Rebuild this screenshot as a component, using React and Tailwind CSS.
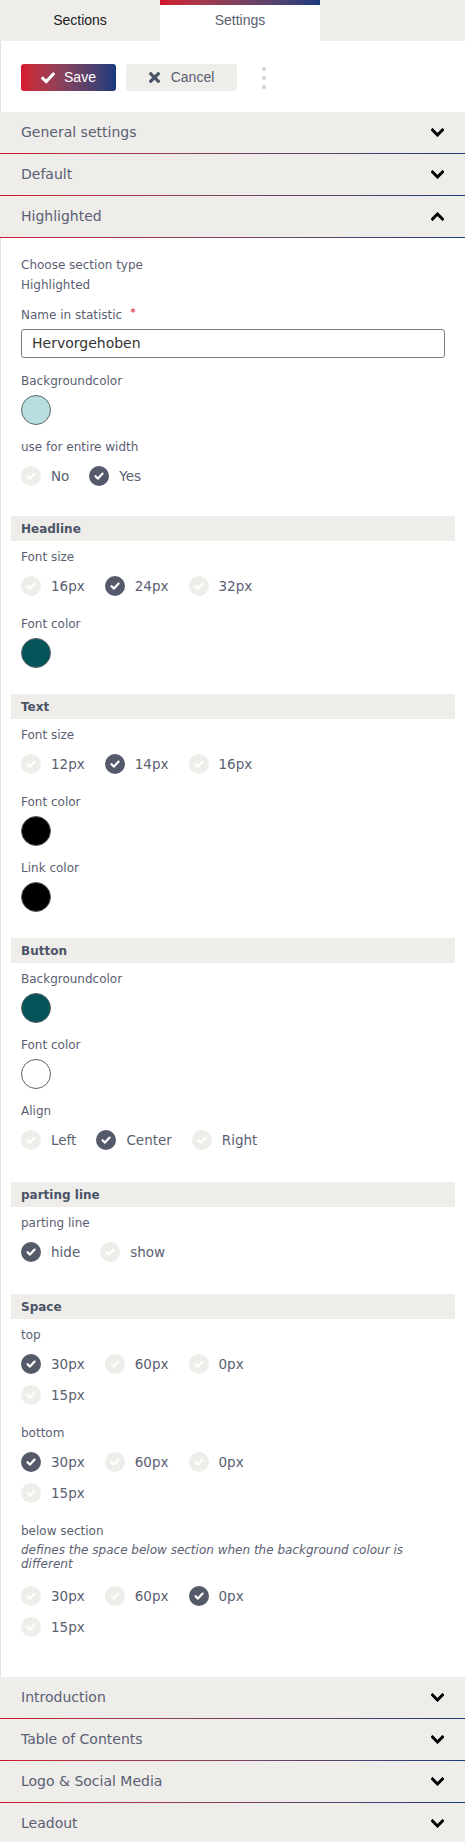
import React from 'react';

const sans = { fontFamily: '"DejaVu Sans", Verdana, sans-serif' };
const arial = { fontFamily: '"Liberation Sans", Arial, sans-serif' };

function Chevron({ up = false }) {
  return (
    <svg width="13" height="9" viewBox="0 0 13 9" className="shrink-0">
      <polyline
        points={up ? '1.5,7 6.5,2 11.5,7' : '1.5,2 6.5,7 11.5,2'}
        fill="none"
        stroke="#000"
        strokeWidth="3"
        strokeLinecap="square"
      />
    </svg>
  );
}

function GradientLine() {
  return <div className="h-px w-full bg-gradient-to-r from-[#d0142c] to-[#163c7e]" />;
}

function AccordionHeader({ title, open = false, line = true }) {
  return (
    <>
      <div className="flex h-[41px] items-center justify-between bg-[#eeedea] pl-[21px] pr-[21px]">
        <span className="text-[14px] text-[#5a6072]" style={sans}>{title}</span>
        <Chevron up={open} />
      </div>
      {line && <GradientLine />}
    </>
  );
}

function CheckMark({ color = '#fff', size = 12 }) {
  return (
    <svg width={size} height={size} viewBox="0 0 12 12">
      <polyline points="2.5,6.2 5,8.6 9.6,3.6" fill="none" stroke={color} strokeWidth="2.2" strokeLinecap="round" strokeLinejoin="round" />
    </svg>
  );
}

function Radio({ label, checked }) {
  return (
    <div className="mr-5 flex h-5 items-center">
      <span
        className={
          'flex h-5 w-5 items-center justify-center rounded-full ' +
          (checked ? 'bg-[#555a6b]' : 'bg-[#eeedea]')
        }
      >
        <CheckMark />
      </span>
      <span className="ml-[10px] text-[13.5px] text-[#5a6072]" style={sans}>{label}</span>
    </div>
  );
}

function RadioGroup({ options, value, spaced }) {
  return (
    <div className={(spaced ? 'mt-[15px] ' : 'mt-[9px] ') + 'flex w-[300px] flex-wrap gap-y-[11px] pb-[6px]'}>
      {options.map((o) => (
        <Radio key={o} label={o} checked={o === value} />
      ))}
    </div>
  );
}

function Label({ children }) {
  return (
    <div className="text-[12px] leading-5 text-[#5a6072]" style={sans}>
      {children}
    </div>
  );
}

function ColorField({ label, color }) {
  return (
    <div className="mb-3">
      <Label>{label}</Label>
      <div
        className="mt-1 h-[30px] w-[30px] rounded-full border border-[#5f6366]"
        style={{ backgroundColor: color }}
      />
    </div>
  );
}

function RadioField({ label, options, value, hint }) {
  return (
    <div className="mb-3">
      <Label>{label}</Label>
      {hint && (
        <div className="mt-[3px] text-[12px] italic leading-[13.5px] text-[#5a6072]" style={sans}>
          {hint}
        </div>
      )}
      <RadioGroup options={options} value={value} spaced={!!hint} />
    </div>
  );
}

function SubSection({ title, children }) {
  return (
    <div className="mb-[14px] flex flex-col">
      <div className="flex h-[25px] items-center bg-[#eeedea] pl-[10px]">
        <span className="text-[12px] font-bold text-[#4b5366]" style={sans}>{title}</span>
      </div>
      <div className="flex flex-col px-[10px] pt-[6px]">{children}</div>
    </div>
  );
}

export default function App() {
  return (
    <div className="w-[465px] bg-white" style={arial}>
      {/* tabs */}
      <div className="flex h-[41px] bg-[#eeedea]">
        <div className="flex w-40 items-center justify-center text-[14px] text-[#1b1b1b]">Sections</div>
        <div className="flex w-40 flex-col bg-white">
          <div className="h-[5px] bg-gradient-to-r from-[#d0142c] to-[#163c7e]" />
          <div className="flex flex-1 items-center justify-center pb-[5px] text-[14px] text-[#5a6072]">Settings</div>
        </div>
      </div>

      {/* actions */}
      <div className="flex items-center border-l border-[#e3e2de] pb-[21px] pl-5 pt-[23px]">
        <button className="flex h-[27px] w-[95px] items-center justify-center gap-[9px] rounded-[3px] bg-gradient-to-r from-[#d5182d] to-[#15397c] text-[14px] text-white">
          <svg width="14" height="12" viewBox="0 0 14 12">
            <polyline points="1.8,6.4 5.2,9.6 12.2,2.2" fill="none" stroke="#fff" strokeWidth="3" strokeLinecap="square" />
          </svg>
          Save
        </button>
        <button className="ml-[10px] flex h-[27px] w-[111px] items-center justify-center gap-[11px] rounded-[3px] bg-[#eeedea] text-[14px] text-[#5a6072]">
          <svg width="11" height="11" viewBox="0 0 11 11">
            <path d="M1.8 1.8 L9.2 9.2 M9.2 1.8 L1.8 9.2" stroke="#4b5366" strokeWidth="3.2" strokeLinecap="square" />
          </svg>
          Cancel
        </button>
        <div className="ml-[25px] flex flex-col gap-[5px]">
          <span className="h-1 w-1 rounded-full bg-[#cfcfcf]" />
          <span className="h-1 w-1 rounded-full bg-[#cfcfcf]" />
          <span className="h-1 w-1 rounded-full bg-[#cfcfcf]" />
        </div>
      </div>

      <AccordionHeader title="General settings" />
      <AccordionHeader title="Default" />
      <AccordionHeader title="Highlighted" open />

      {/* open panel */}
      <div className="flex flex-col border-l border-[#e3e2de] px-[10px] pb-2 pt-[17px]">
        <div className="mb-3 flex flex-col px-[10px]">
          <Label>Choose section type</Label>
          <div className="mb-[10px]">
            <Label>Highlighted</Label>
          </div>
          <div className="mb-[13px]">
            <div className="flex items-start text-[12px] leading-5 text-[#5a6072]" style={sans}>
              Name in statistic
              <span className="ml-2 text-[11px] leading-4 text-[#e0101e]">*</span>
            </div>
            <div
              className="mt-1 flex h-[29px] w-full items-center rounded-[3px] border border-[#7b7b7b] px-[10px] text-[14px] text-[#333]"
              style={sans}
            >
              Hervorgehoben
            </div>
          </div>
          <ColorField label="Backgroundcolor" color="#b7dfe0" />
          <RadioField label="use for entire width" options={['No', 'Yes']} value="Yes" />
        </div>

        <SubSection title="Headline">
          <RadioField label="Font size" options={['16px', '24px', '32px']} value="24px" />
          <ColorField label="Font color" color="#04555a" />
        </SubSection>

        <SubSection title="Text">
          <RadioField label="Font size" options={['12px', '14px', '16px']} value="14px" />
          <ColorField label="Font color" color="#000000" />
          <ColorField label="Link color" color="#000000" />
        </SubSection>

        <SubSection title="Button">
          <ColorField label="Backgroundcolor" color="#04555a" />
          <ColorField label="Font color" color="#ffffff" />
          <RadioField label="Align" options={['Left', 'Center', 'Right']} value="Center" />
        </SubSection>

        <SubSection title="parting line">
          <RadioField label="parting line" options={['hide', 'show']} value="hide" />
        </SubSection>

        <SubSection title="Space">
          <RadioField label="top" options={['30px', '60px', '0px', '15px']} value="30px" />
          <RadioField label="bottom" options={['30px', '60px', '0px', '15px']} value="30px" />
          <RadioField
            label="below section"
            hint="defines the space below section when the background colour is different"
            options={['30px', '60px', '0px', '15px']}
            value="0px"
          />
        </SubSection>
      </div>

      <AccordionHeader title="Introduction" />
      <AccordionHeader title="Table of Contents" />
      <AccordionHeader title="Logo & Social Media" />
      <AccordionHeader title="Leadout" line={false} />
    </div>
  );
}
